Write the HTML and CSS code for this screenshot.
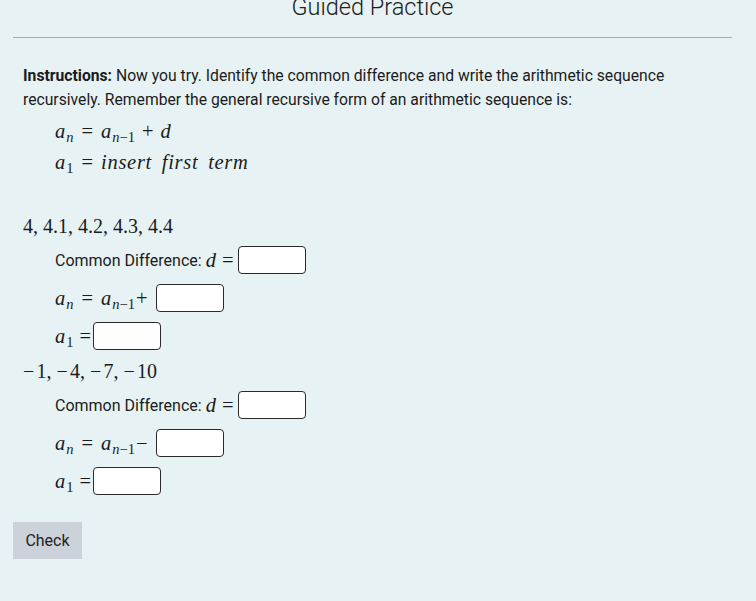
FILE: index.html
```html
<!DOCTYPE html>
<html>
<head>
<meta charset="utf-8">
<link rel="stylesheet" href="styles.css">
</head>
<body>
<div class="page">
  <h1 class="title">Guided Practice</h1>
  <hr class="rule">
  <p class="instructions"><strong>Instructions:</strong> Now you try. Identify the common difference and write the arithmetic sequence recursively. Remember the general recursive form of an arithmetic sequence is:</p>
  <div class="formula">
    <div class="fline"><span class="math"><i>a</i><sub><i>n</i></sub><span class="rel">=</span><i>a</i><sub><i>n</i>−1</sub><span class="bin">+</span><i>d</i></span></div>
    <div class="fline"><span class="math"><i>a</i><sub>1</sub><span class="rel">=</span><i class="wide">insert first term</i></span></div>
  </div>

  <div class="seq"><span class="math up">4, 4.1, 4.2, 4.3, 4.4</span></div>
  <div class="row"><span class="label">Common Difference: </span><span class="math"><i>d</i><span class="rel cd">=</span></span><span class="box"></span></div>
  <div class="row"><span class="math"><i>a</i><sub><i>n</i></sub><span class="rel">=</span><i>a</i><sub><i>n</i>−1</sub><span class="op">+</span></span><span class="box"></span></div>
  <div class="row"><span class="math"><i>a</i><sub>1</sub><span class="rel tight">=</span></span><span class="box"></span></div>

  <div class="seq"><span class="math up"><span class="minus">−</span>1, <span class="minus">−</span>4, <span class="minus">−</span>7, <span class="minus">−</span>10</span></div>
  <div class="row"><span class="label">Common Difference: </span><span class="math"><i>d</i><span class="rel cd">=</span></span><span class="box"></span></div>
  <div class="row"><span class="math"><i>a</i><sub><i>n</i></sub><span class="rel">=</span><i>a</i><sub><i>n</i>−1</sub><span class="op">−</span></span><span class="box"></span></div>
  <div class="row"><span class="math"><i>a</i><sub>1</sub><span class="rel tight">=</span></span><span class="box"></span></div>

  <button class="check">Check</button>
</div>
</body>
</html>
```
FILE: styles.css
```css
html, body {
  margin: 0;
  padding: 0;
  background: #e7f2f4;
}
body {
  font-family: Roboto, "Liberation Sans", sans-serif;
  color: #1b1b1b;
  font-size: 16px;
}
.page {
  margin: 0 24px 0 13px;
}
.title {
  margin: -7px 0 0 0;
  font-weight: 300;
  font-size: 23.5px;
  line-height: 28px;
  text-align: center;
  color: #202020;
}
.rule {
  margin: 16px 0 0 0;
  border: 0;
  border-top: 1px solid #a4aeb1;
  height: 0;
}
.instructions {
  margin: 26px 0 0 0;
  padding-left: 10px;
  font-size: 15.7px;
  line-height: 24px;
}
.instructions strong {
  font-weight: 700;
}
.formula {
  margin: 3px 0 0 0;
  padding-left: 42px;
}
.fline {
  height: 31px;
  display: flex;
  align-items: center;
}
.math {
  font-family: "Liberation Serif", serif;
  font-size: 20.5px;
  line-height: 24px;
  white-space: nowrap;
}
.math i {
  font-style: italic;
}
.math sub {
  font-size: 14.5px;
  vertical-align: -4px;
  line-height: 0;
  margin-left: 1px;
}
.wide {
  letter-spacing: 0.7px;
  word-spacing: 4px;
}
.rel {
  margin: 0 8px;
}
.rel.cd {
  margin: 0 5px 0 6px;
}
.rel.tight {
  margin: 0 2px 0 6px;
}
.bin {
  margin: 0 7px;
}
.op {
  margin-left: 1px;
  margin-right: 8px;
}
.minus {
  display: inline-block;
  width: 13.5px;
  text-align: left;
}
.seq {
  margin-top: 33px;
  padding-left: 10px;
  height: 31px;
  display: flex;
  align-items: center;
}
.seq .math {
  font-size: 20px;
}
.row + .seq {
  margin-top: 0;
}
.row {
  height: 38px;
  padding-left: 42px;
  display: flex;
  align-items: center;
}
.label {
  font-size: 16px;
  white-space: pre;
}
.box {
  display: inline-block;
  width: 66px;
  height: 26px;
  background: #ffffff;
  border: 1px solid #2a2a2a;
  border-radius: 4px;
}
.check {
  margin-top: 22px;
  display: block;
  height: 37px;
  width: 69px;
  padding: 0;
  border: 0;
  background: #ccd2d9;
  color: #222;
  font-family: Roboto, "Liberation Sans", sans-serif;
  font-size: 16px;
}
```
